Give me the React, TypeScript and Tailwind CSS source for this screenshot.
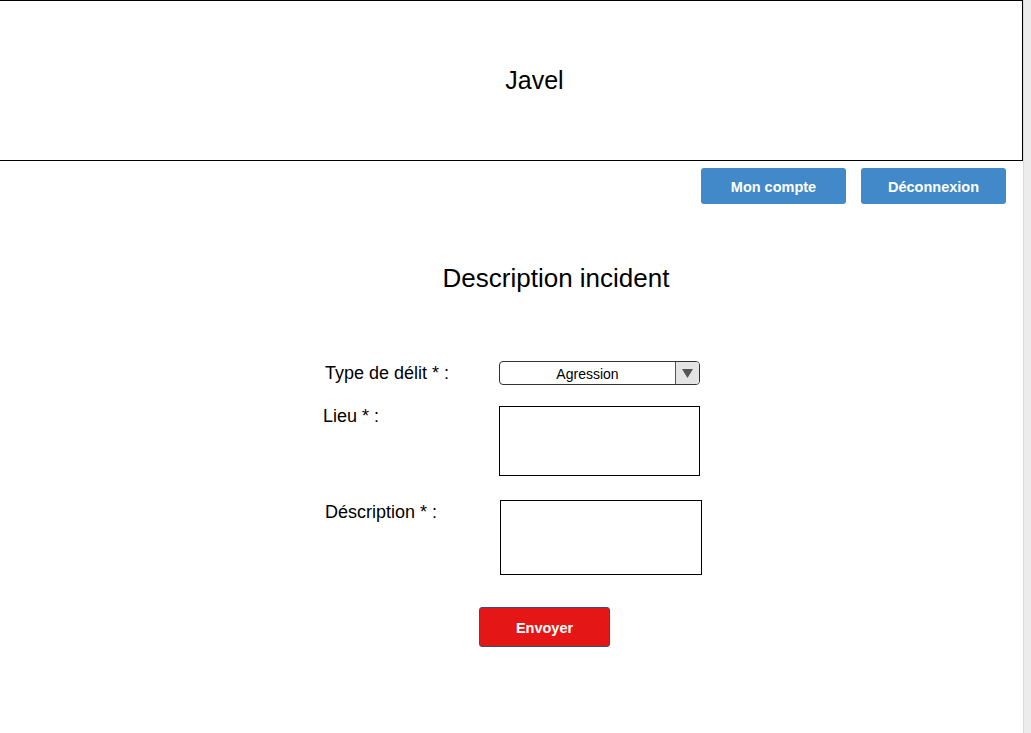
const labelCls = "text-[18px] leading-[20px] text-black";

function SelectBox({ value }: { value: string }) {
  return (
    <div className="flex h-[24px] w-[201px] overflow-hidden rounded-[4px] border border-[#333] bg-white">
      <div className="flex flex-1 items-center justify-center pt-[1px] text-[14px] leading-none text-black">
        {value}
      </div>
      <div className="flex w-[24px] items-center justify-center border-l border-[#555] bg-[#e4e4e4]">
        <svg width="11" height="9" viewBox="0 0 11 9">
          <path d="M0 0 L11 0 L5.5 9 Z" fill="#555" />
        </svg>
      </div>
    </div>
  );
}

function BlueButton({ children }: { children: React.ReactNode }) {
  return (
    <button className="flex h-[36px] w-[145px] items-center justify-center rounded-[3px] bg-[#4289c9] pt-[3px] text-[14.5px] font-bold text-white">
      {children}
    </button>
  );
}

export default function App() {
  return (
    <div
      className="flex h-screen w-full bg-white text-black"
      style={{ fontFamily: '"Liberation Sans", Arial, sans-serif' }}
    >
      <div className="flex w-[1023px] flex-col">
        {/* Header */}
        <header className="flex h-[161px] items-center justify-center border-y border-r border-black pl-[47px]">
          <h1 className="mb-[1px] text-[25px] leading-[28px]">Javel</h1>
        </header>

        {/* Account actions */}
        <div className="mt-[7px] flex justify-end gap-[15px] pr-[17px]">
          <BlueButton>Mon compte</BlueButton>
          <BlueButton>Déconnexion</BlueButton>
        </div>

        {/* Title */}
        <h2 className="mt-[59px] pl-[89px] text-center text-[26px] leading-[30px]">
          Description incident
        </h2>

        {/* Form */}
        <form className="mt-[68px] flex flex-col pl-[325px]">
          <div className="flex items-center">
            <label className={`${labelCls} w-[174px]`}>Type de délit * :</label>
            <SelectBox value="Agression" />
          </div>

          <div className="mt-[21px] flex items-start">
            <label className={`${labelCls} ml-[-2px] w-[176px]`}>Lieu * :</label>
            <textarea className="h-[70px] w-[201px] resize-none border border-black bg-white outline-none" />
          </div>

          <div className="mt-[24px] flex items-start">
            <label className={`${labelCls} mt-[2px] w-[175px]`}>Déscription * :</label>
            <textarea className="h-[75px] w-[202px] resize-none border border-black bg-white outline-none" />
          </div>

          <div className="mt-[32px] pl-[154px]">
            <button
              type="button"
              className="flex h-[40px] w-[131px] items-center justify-center rounded-[3px] border border-[#2a4f9a] bg-[#e51616] pt-[3px] text-[14.5px] font-bold text-white"
            >
              Envoyer
            </button>
          </div>
        </form>
      </div>

      {/* Right gutter */}
      <div className="w-[8px] border-l border-[#dadada] bg-[#ececec]" />
    </div>
  );
}
